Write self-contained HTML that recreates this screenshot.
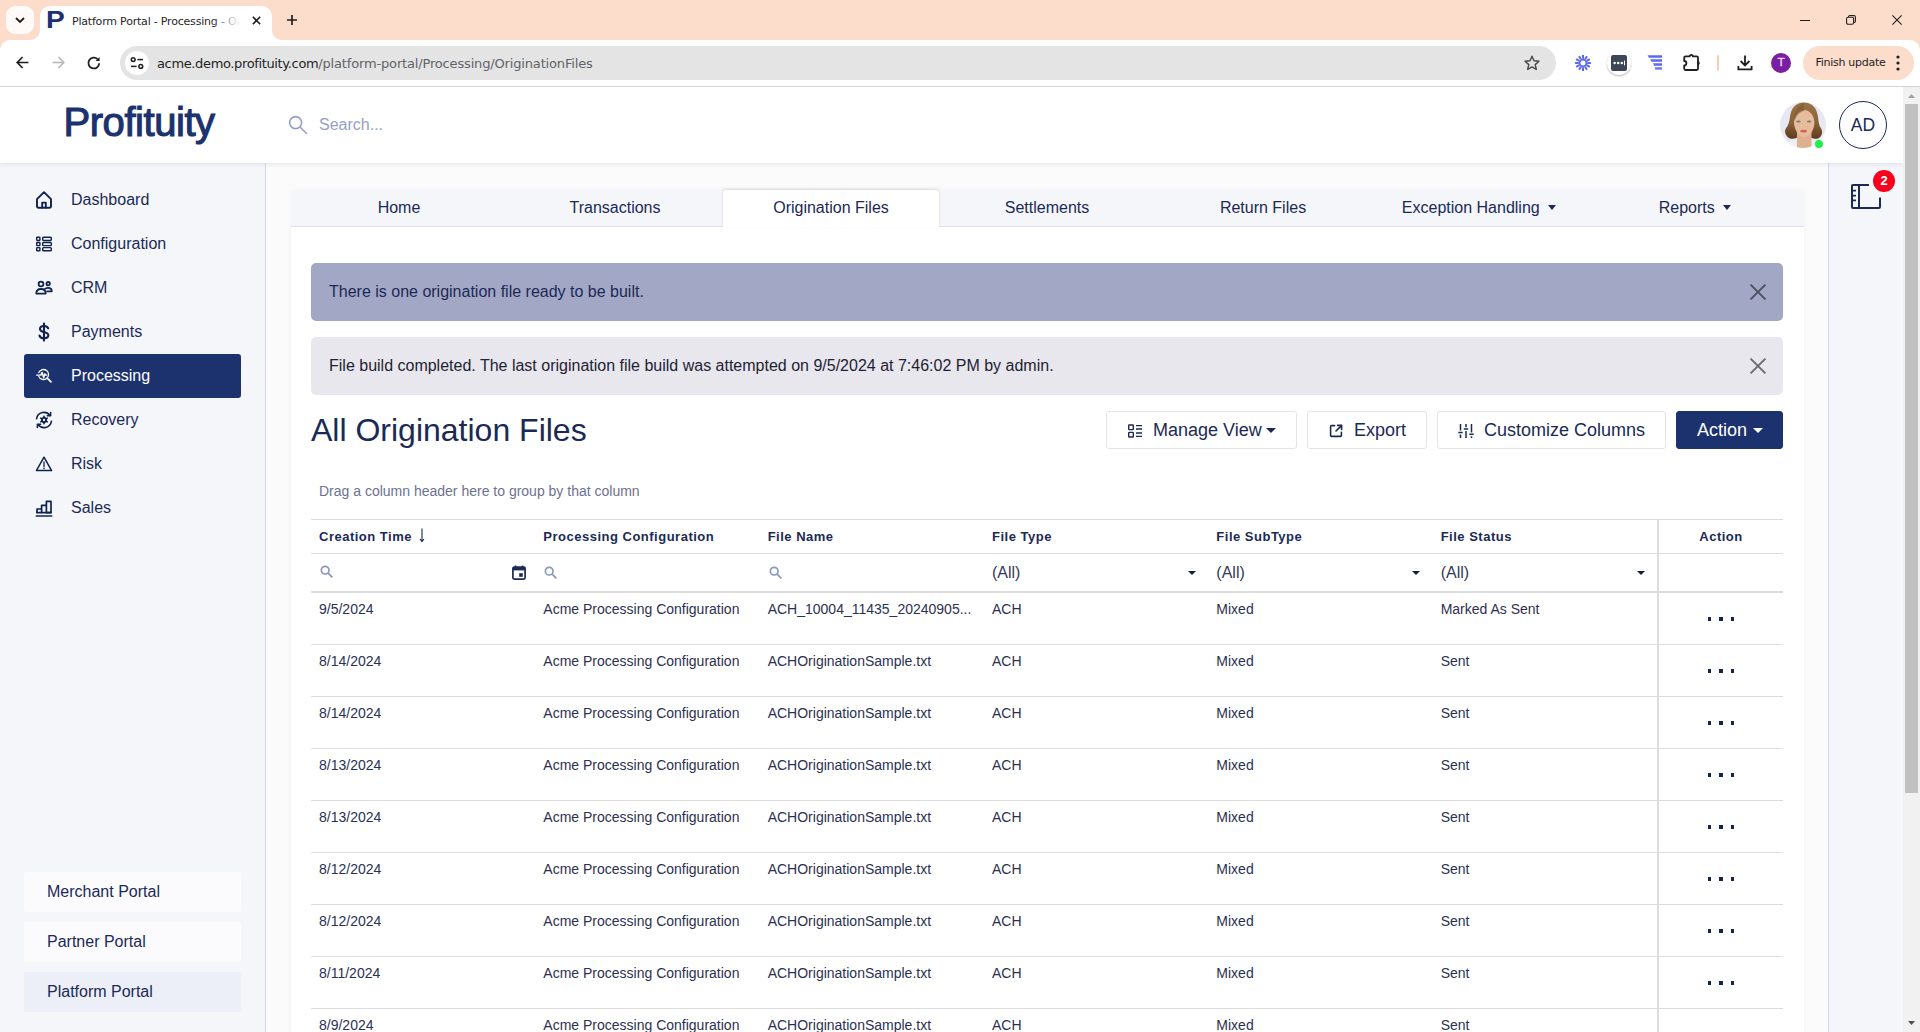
<!DOCTYPE html>
<html lang="en">
<head>
<meta charset="utf-8">
<title>Platform Portal - Processing - Origination Files</title>
<style>
*{box-sizing:border-box;margin:0;padding:0}
html,body{width:1920px;height:1032px;overflow:hidden;background:#fff;font-family:"Liberation Sans",Arial,sans-serif;color:#1b2a55}
#chrome{position:absolute;left:0;top:0;width:1920px;height:87px;background:#fcdccb}
#tabsearch{position:absolute;left:6px;top:6px;width:28px;height:28px;border-radius:9px;background:#fffaf7}
#tab{position:absolute;left:40px;top:6px;width:232px;height:34px;background:#fff;border-radius:10px 10px 0 0}
#tab:before,#tab:after{content:"";position:absolute;bottom:0;width:10px;height:10px}
#tab:before{left:-10px;background:radial-gradient(circle at 0 0,rgba(255,255,255,0) 9.5px,#fff 10.5px)}
#tab:after{right:-10px;background:radial-gradient(circle at 100% 0,rgba(255,255,255,0) 9.5px,#fff 10.5px)}
#fav{position:absolute;left:6px;top:2px;font-size:23px;line-height:24px;font-weight:bold;color:#1b326e;transform:scaleX(1.22);transform-origin:0 0}
#tabtitle{position:absolute;left:32px;top:8px;width:168px;font-size:11px;line-height:16px;color:#262626;white-space:nowrap;overflow:hidden;font-family:"DejaVu Sans","Liberation Sans",sans-serif;letter-spacing:-0.2px}
#tabfade{position:absolute;left:172px;top:4px;width:28px;height:22px;background:linear-gradient(90deg,rgba(255,255,255,0),#fff)}
#chrome svg{position:absolute;overflow:visible}
#toolbar{position:absolute;left:0;top:40px;width:1920px;height:46px;background:#fff;border-radius:10px 10px 0 0}
#chromeline{position:absolute;left:0;top:86px;width:1920px;height:1px;background:#d2d2d2}
#omni{position:absolute;left:120px;top:6px;width:1436px;height:34px;border-radius:17px;background:#e4e4e4}
#omni .site{position:absolute;left:5px;top:5px;width:24px;height:24px;border-radius:12px;background:#fff}
#url{position:absolute;left:37px;top:9px;font-size:13px;line-height:18px;color:#1f1f1f;white-space:nowrap;font-family:"DejaVu Sans","Liberation Sans",sans-serif;letter-spacing:-0.36px}
#url span{color:#5f6368;letter-spacing:-0.16px}
#finish{position:absolute;left:1803px;top:6px;width:111px;height:34px;border-radius:17px;background:#fcdccb;font-size:11px;line-height:34px;color:#1f1f1f;padding-left:12.5px;font-family:"DejaVu Sans","Liberation Sans",sans-serif;letter-spacing:-0.28px}
#profT{position:absolute;left:1771px;top:13px;width:20px;height:20px;border-radius:10px;background:#7b1fa2;color:#ead6f2;font-size:11px;-webkit-text-stroke:.35px #ead6f2;line-height:20px;text-align:center;font-family:"DejaVu Sans","Liberation Sans",sans-serif}
#extbg{position:absolute;left:1607px;top:11px;width:24px;height:24px;border-radius:12px;background:#fff;box-shadow:0 1px 2px rgba(0,0,0,.3)}
#extsq{position:absolute;left:1611px;top:15px;width:16px;height:16px;border-radius:2px;background:#3c4657;color:#fff;font-size:6px;line-height:16px;text-align:center;letter-spacing:0}
#sepbar{position:absolute;left:1717px;top:15px;width:2px;height:16px;background:#f9cdb8;border-radius:1px}

#page{position:absolute;left:0;top:87px;width:1903px;height:945px;background:#fbfbfc;overflow:hidden}
#header{position:absolute;left:0;top:0;width:1903px;height:76px;background:#fff;box-shadow:0 1px 5px rgba(30,40,90,.10);z-index:5}
#logo{position:absolute;left:63.5px;top:10.5px;font-size:40px;line-height:48px;font-weight:normal;color:#1b326e;letter-spacing:-0.45px;-webkit-text-stroke:1.1px #1b326e}
#header svg{position:absolute}
#search{position:absolute;left:319px;top:28px;font-size:16px;line-height:20px;color:#96a0c4}
#avatar{position:absolute;left:1780px;top:15px;width:46px;height:46px;border-radius:23px;background:#e6e8f4;overflow:hidden}
#avatar svg{left:0;top:0}
#online{position:absolute;left:1815px;top:53px;width:8.4px;height:8.4px;border-radius:5px;background:#1ff04a}
#ad{position:absolute;left:1839px;top:14px;width:48px;height:48px;border-radius:24px;border:1px solid #1b2a55;font-size:17.5px;line-height:47px;text-align:center;color:#1b2a55}
#sidebar{position:absolute;left:0;top:76px;width:266px;height:869px;background:#f5f6fa;border-right:1px solid #d4d7ea}
.nav{position:absolute;left:24px;width:217px;height:44px;border-radius:3px;font-size:16px;line-height:44px;padding-left:47px;color:#1b2a55}
.nav.active{background:#1b326e;color:#fff}
.nav svg{position:absolute;left:11px;top:13px;width:18px;height:18px;overflow:visible;color:#10234f}
.nav.active svg{color:#fff}
.portal{position:absolute;left:24px;width:217px;height:40px;border-radius:3px;background:#fbfbfd;font-size:16px;line-height:40px;padding-left:23px;color:#1b2a55}
.portal.cur{background:#eceef8}
#rightbar{position:absolute;left:1828px;top:76px;width:75px;height:869px;background:#f5f6fa;border-left:1px solid #d4d7ea}
#rightbar svg{position:absolute;overflow:visible}
#badge{position:absolute;left:44px;top:7px;width:22px;height:22px;border-radius:11px;background:#f5001d;color:#fff;font-size:13px;font-weight:bold;line-height:22px;text-align:center}
#scroll{position:absolute;left:1903px;top:87px;width:17px;height:945px;background:#f1f1f1}
#thumb{position:absolute;left:2px;top:17px;width:13px;height:689px;background:#c1c1c1}
#card{position:absolute;left:291px;top:102px;width:1513px;height:850px;background:transparent}
#cardbody{position:absolute;left:0;top:1px;width:1513px;height:850px;background:#fff;border-radius:4px 4px 0 0;box-shadow:0 0 7px rgba(20,30,80,.035)}
#tabs{position:absolute;left:0;top:1px;width:1513px;border-radius:4px 4px 0 0;height:37px;background:#f5f6fa;border-bottom:1px solid #dee0ea}
.t{position:absolute;top:0;width:216px;height:36px;font-size:16px;line-height:36px;text-align:center;color:#1b2a55}
.t.on{background:#fff;height:37px;border-radius:3px 3px 0 0;box-shadow:0 -1px 3px rgba(0,0,0,.12)}
.caret{display:inline-block;width:0;height:0;border-left:4.5px solid transparent;border-right:4.5px solid transparent;border-top:5px solid currentColor;vertical-align:middle;margin-left:4px;position:relative;top:-1px}
.caret.sm{border-left-width:4.5px;border-right-width:4.5px;border-top-width:4.5px;color:#141d45}
.caret.lg{border-left-width:5px;border-right-width:5px;border-top-width:5px}
.alert{position:absolute;left:20px;width:1472px;height:58px;border-radius:5px;font-size:16px;line-height:58px;padding-left:18px;white-space:nowrap}
#a1{top:74px;background:#a3a7c6;color:#1b2a55}
#a2{top:148px;background:#e8e7ee;color:#1f2233}
.alert svg{position:absolute;right:16px;top:20px;width:18px;height:18px}
#h1{position:absolute;left:20px;top:221px;font-size:32px;line-height:40px;color:#1b2a55;font-weight:normal;white-space:nowrap}
.btn{position:absolute;top:222px;height:38px;border:1px solid #e3e4ec;border-radius:3px;background:#fff;font-size:18px;line-height:36px;color:#1b2a55;white-space:nowrap}
.btn span{position:absolute;top:0}
.btn .bi{position:absolute;left:19.5px;top:10.5px;width:16px;height:16px}
.btn.pri{background:#1b326e;border-color:#1b326e;color:#fff}
#drag{position:absolute;left:28px;top:294px;font-size:14px;line-height:16px;color:#6e7191}
#grid{position:absolute;left:20px;top:330px;width:1472px;height:520px;border-top:1px solid #ddd}
.hl{position:absolute;left:0;width:1472px;height:1px;background:#ddd}
.vl{position:absolute;left:1346px;top:0;width:2px;height:520px;background:#ddd}
.c{position:absolute;font-size:14px;line-height:16px;color:#2b3152;white-space:nowrap}
.h{position:absolute;font-size:13px;line-height:16px;color:#1b2a55;font-weight:bold;white-space:nowrap;top:9px;letter-spacing:.5px}
.sort{position:absolute;left:99.5px;top:-1.5px;width:6px;height:15px;overflow:visible}
.f{position:absolute;font-size:16px;line-height:18px;color:#333a5c;top:44px}
.mag{position:absolute;width:13.5px;height:13.5px;margin:.3px 0 0 .5px}
.cal{position:absolute;width:14px;height:15px}
.dots{position:absolute;left:1347px;width:126px;height:4px;text-align:center;font-size:0;line-height:0}
.dots b{display:inline-block;width:3.6px;height:4px;background:#16224f;margin:0 4px}

</style>
</head>
<body>
<div id="chrome">
  <div id="tabsearch"></div>
  <svg style="left:15px;top:17px" width="10" height="7" viewBox="0 0 10 7" fill="none" stroke="#1f1f1f" stroke-width="1.8"><path d="M1 1 L5 5 L9 1"/></svg>
  <div id="tab"><div id="fav">P</div><div id="tabtitle">Platform Portal - Processing - Origination Files</div><div id="tabfade"></div>
    <svg style="left:212px;top:10px" width="9" height="9" viewBox="0 0 9 9" fill="none" stroke="#1f1f1f" stroke-width="1.6"><path d="M.8 .8 L8.2 8.2 M8.2 .8 L.8 8.2"/></svg>
  </div>
  <svg style="left:287px;top:15px" width="10" height="10" viewBox="0 0 10 10" fill="none" stroke="#1f1f1f" stroke-width="1.7"><path d="M5 0 V10 M0 5 H10"/></svg>
  <svg style="left:1800px;top:20px" width="10" height="1" viewBox="0 0 10 1"><path d="M0 .5 H10" stroke="#1f1f1f" stroke-width="1"/></svg>
  <svg style="left:1846px;top:15px" width="10" height="10" viewBox="0 0 12 12" fill="none" stroke="#1f1f1f" stroke-width="1.3"><rect x=".7" y="2.7" width="8.4" height="8.4" rx="1.8"/><path d="M3 2.4 V2 A1.6 1.6 0 0 1 4.6 .7 H9.6 A1.8 1.8 0 0 1 11.3 2.4 V7.4 A1.6 1.6 0 0 1 9.8 9 H9.4"/></svg>
  <svg style="left:1892px;top:15px" width="10" height="10" viewBox="0 0 10 10" fill="none" stroke="#1f1f1f" stroke-width="1.1"><path d="M.4 .4 L9.6 9.6 M9.6 .4 L.4 9.6"/></svg>
  <div id="toolbar">
    <svg style="left:16px;top:16px" width="13" height="13" viewBox="0 0 13 13" fill="none" stroke="#1f1f1f" stroke-width="1.7"><path d="M12.4 6.5 H1.6 M6.6 1 L1.2 6.5 L6.6 12"/></svg>
    <svg style="left:52px;top:16px" width="13" height="13" viewBox="0 0 13 13" fill="none" stroke="#b8b8b8" stroke-width="1.7"><path d="M.6 6.5 H11.4 M6.4 1 L11.8 6.5 L6.4 12"/></svg>
    <svg style="left:87px;top:16px" width="14" height="14" viewBox="0 0 14 14" fill="none" stroke="#1f1f1f" stroke-width="1.8"><path d="M12.2 7.2 A5.4 5.4 0 1 1 10.6 3.2"/><path d="M12.6 1 V5 H8.6" fill="#1f1f1f" stroke="none"/></svg>
    <div id="omni"><div class="site"></div>
      <svg style="left:10px;top:11px" width="14" height="12" viewBox="0 0 14 12" fill="none" stroke="#1f1f1f" stroke-width="1.5"><circle cx="3.2" cy="2.6" r="1.9"/><path d="M7.4 2.6 H13"/><circle cx="10.8" cy="9.4" r="1.9"/><path d="M1 9.4 H6.6"/></svg>
      <div id="url">acme.demo.profituity.com<span>/platform-portal/Processing/OriginationFiles</span></div>
      <svg style="left:1404px;top:9px" width="16" height="16" viewBox="0 0 16 16" fill="none" stroke="#474747" stroke-width="1.4" stroke-linejoin="round"><path d="M8 1.2 L10 5.8 L15 6.3 L11.2 9.6 L12.3 14.5 L8 11.9 L3.7 14.5 L4.8 9.6 L1 6.3 L6 5.8 Z"/></svg>
    </div>
    <svg style="left:1575px;top:15px" width="16" height="16" viewBox="0 0 16 16" fill="none" stroke="#5b68f0" stroke-width="2"><circle cx="8" cy="8" r="3.4" stroke-width="1.8"/><path d="M12.20 8.00L15.90 8.00M11.64 10.10L14.84 11.95M10.10 11.64L11.95 14.84M8.00 12.20L8.00 15.90M5.90 11.64L4.05 14.84M4.36 10.10L1.16 11.95M3.80 8.00L0.10 8.00M4.36 5.90L1.16 4.05M5.90 4.36L4.05 1.16M8.00 3.80L8.00 0.10M10.10 4.36L11.95 1.16M11.64 5.90L14.84 4.05"/></svg>
    <div id="extbg"></div><div id="extsq"><svg style="left:0;top:0" width="16" height="16" viewBox="0 0 16 16" fill="#fff"><circle cx="3.6" cy="8" r="1.25"/><circle cx="7.2" cy="8" r="1.25"/><circle cx="10.8" cy="8" r="1.25"/><rect x="13" y="5.6" width="1" height="4.8"/></svg></div>
    <svg style="left:1647px;top:15px" width="16" height="16" viewBox="0 0 16 16" fill="#5b68f0"><path d="M.6 .2 H15 V2.7 H2 Z"/><path d="M3.2 4.2 H15 V6.7 H4.6 Z"/><path d="M6 8.2 H15 V10.7 H7.2 Z"/><rect x="8" y="12.2" width="7" height="2.5" fill="#6f7cf3"/></svg>
    <svg style="left:1683px;top:13px" width="18" height="19" viewBox="0 0 18 19" fill="none" stroke="#1f1f1f" stroke-width="1.8" stroke-linejoin="round"><path d="M2.6 3.4 H6.6 A1.6 1.6 0 0 1 9.8 3.4 H13.6 A1.4 1.4 0 0 1 15 4.8 V15.6 A1.4 1.4 0 0 1 13.6 17 H2.6 A1.4 1.4 0 0 1 1.2 15.6 V12.4 A2.2 2.2 0 0 0 1.2 8 V4.8 A1.4 1.4 0 0 1 2.6 3.4 Z"/><path d="M15 8.6 A1.7 1.7 0 0 1 15 11.8 Z" fill="#1f1f1f" stroke-width="1.2"/></svg>
    <div id="sepbar"></div>
    <svg style="left:1737px;top:15px" width="16" height="16" viewBox="0 0 16 16" fill="none" stroke="#1f1f1f" stroke-width="1.8"><path d="M8 .5 V10 M3.6 6 L8 10.4 L12.4 6"/><path d="M1.4 11 V14.4 H14.6 V11"/></svg>
    <div id="profT">T</div>
    <div id="finish">Finish update</div>
    <svg style="left:1896px;top:15px" width="4" height="16" viewBox="0 0 4 16" fill="#1f1f1f"><circle cx="2" cy="2" r="1.6"/><circle cx="2" cy="8" r="1.6"/><circle cx="2" cy="14" r="1.6"/></svg>
  </div>
  <div id="chromeline"></div>
</div>
<div id="page">
  <div id="sidebar">
<div class="nav" style="top:15px"><svg viewBox="0 0 18 18" fill="none" stroke="currentColor" stroke-width="1.9" stroke-linejoin="round" stroke-linecap="round"><path d="M2 8.2 L9 1.2 L16 8.2 V15.3 a1.5 1.5 0 0 1 -1.5 1.5 H3.5 A1.5 1.5 0 0 1 2 15.3 Z"/><path d="M7.2 16.6 V11.6 H10.8 V16.6"/></svg>Dashboard</div>
<div class="nav" style="top:59px"><svg viewBox="0 0 18 18" fill="none" stroke="currentColor" stroke-width="1.45"><rect x="1.7" y="2.2" width="3.2" height="3.2" rx=".6"/><rect x="1.7" y="7.4" width="3.2" height="3.2" rx=".6"/><rect x="1.7" y="12.6" width="3.2" height="3.2" rx=".6"/><rect x="7.7" y="2.2" width="8.6" height="3.2" rx=".8"/><rect x="7.7" y="7.4" width="8.6" height="3.2" rx=".8"/><rect x="7.7" y="12.6" width="8.6" height="3.2" rx=".8"/></svg>Configuration</div>
<div class="nav" style="top:103px"><svg viewBox="0 0 18 18" fill="none" stroke="currentColor" stroke-width="1.8" stroke-linejoin="round"><circle cx="6" cy="5" r="2.4"/><circle cx="13.2" cy="4.7" r="1.7"/><path d="M1.3 14.6 C1.3 11.4 3.4 10 6 10 S10.7 11.4 10.7 14.6 Z"/><path d="M9.6 10.2 C10.6 9.2 11.8 8.8 13 8.8 C15.2 8.8 16.8 10 16.8 12.3 H11.4"/></svg>CRM</div>
<div class="nav" style="top:147px"><svg viewBox="0 0 18 18" fill="none" stroke="currentColor" stroke-width="2.1" stroke-linecap="round"><path d="M13.2 5.3 C12.6 3.6 11 3 9 3 C6.6 3 5 4.2 5 5.9 C5 7.7 6.6 8.4 9 9 C11.6 9.6 13.3 10.4 13.3 12.3 C13.3 14.1 11.5 15.2 9 15.2 C6.6 15.2 5 14.3 4.5 12.6"/><path d="M9 .6 V17.6"/></svg>Payments</div>
<div class="nav active" style="top:191px"><svg viewBox="-1 0 20 20" fill="none" stroke="currentColor" stroke-width="1.4" stroke-linecap="round" stroke-linejoin="round"><path d="M3.3 6.2 A5.6 5.6 0 1 1 3.3 10.6"/><path d="M12.6 12.4 L16.8 16.6" stroke-width="1.8"/><path d="M.8 9 H5.6 L6.9 6 L8.6 12 L10 7.6 L10.8 9 H12" stroke-width="1.6"/></svg>Processing</div>
<div class="nav" style="top:235px"><svg viewBox="0 0 18 18" fill="none" stroke="currentColor" stroke-width="1.6" stroke-linecap="round" stroke-linejoin="round"><path d="M1.6 7.6 A7.5 7.5 0 0 1 15 4.4"/><path d="M15.6 1.6 V4.8 H12.4"/><path d="M16.4 10.4 A7.5 7.5 0 0 1 3 13.6"/><path d="M2.4 16.4 V13.2 H5.6"/><circle cx="9" cy="9" r="2.1" stroke-width="1.9"/><path d="M9 5.4V6.4M9 11.6V12.6M5.9 7.2l.9.5M11.2 10.3l.9.5M5.9 10.8l.9-.5M11.2 7.7l.9-.5" stroke-width="1.7"/></svg>Recovery</div>
<div class="nav" style="top:279px"><svg viewBox="0 0 18 18" fill="none" stroke="currentColor" stroke-width="1.5" stroke-linecap="round" stroke-linejoin="round"><path d="M9 2.2 L16.6 15.6 H1.4 Z"/><path d="M9 7 V11.4" stroke-width="1.3"/><path d="M9 13.4 V13.5" stroke-width="1.6"/></svg>Risk</div>
<div class="nav" style="top:323px"><svg viewBox="0 0 18 18" fill="none" stroke="currentColor" stroke-width="1.7" stroke-linejoin="round" stroke-linecap="round"><path d="M2 13.6 V10 H6.6 V13.6 M6.6 13.6 V6.4 H11.4 V13.6 M11.4 13.6 V2.4 H16 V13.6 Z"/><path d="M2 13.6 H16"/><path d="M1.4 17 H16.6"/></svg>Sales</div>
<div class="portal" style="top:709px">Merchant Portal</div>
<div class="portal" style="top:759px">Partner Portal</div>
<div class="portal cur" style="top:809px">Platform Portal</div>

  </div>
  <div id="rightbar">
    <svg style="left:22px;top:21px" width="30" height="25" viewBox="0 0 30 26" preserveAspectRatio="none" fill="none" stroke="#1b2a55" stroke-width="2" stroke-linejoin="round"><path d="M18 1 H2 A1 1 0 0 0 1 2 V24 A1 1 0 0 0 2 25 H28 A1 1 0 0 0 29 24 V14"/><path d="M8 1 V25"/><path d="M1 7 H5 M1 12 H5 M1 17 H5" stroke-width="1.8"/></svg>
    <div id="badge">2</div>
  </div>
  <div id="card"><div id="cardbody"></div>
    <div id="tabs"><div class="t" style="left:0px">Home</div><div class="t" style="left:216px">Transactions</div><div class="t on" style="left:432px">Origination Files</div><div class="t" style="left:648px">Settlements</div><div class="t" style="left:864px">Return Files</div><div class="t" style="left:1080px">Exception Handling <i class="caret"></i></div><div class="t" style="left:1296px">Reports <i class="caret"></i></div></div>
<div class="alert" id="a1">There is one origination file ready to be built.<svg viewBox="0 0 18 18" fill="none" stroke="#4d525f" stroke-width="2"><path d="M1.6 1.6 L16.4 16.4 M16.4 1.6 L1.6 16.4"/></svg></div>
<div class="alert" id="a2">File build completed. The last origination file build was attempted on 9/5/2024 at 7:46:02 PM by admin.<svg viewBox="0 0 18 18" fill="none" stroke="#6a6c76" stroke-width="2"><path d="M1.6 1.6 L16.4 16.4 M16.4 1.6 L1.6 16.4"/></svg></div>

    <div id="h1">All Origination Files</div>
<div class="btn" style="left:815px;width:191px"><svg class="bi" viewBox="0 0 16 16" fill="none" stroke="currentColor" stroke-width="1.4"><rect x="1.7" y="2" width="4.6" height="4.6" rx=".5"/><rect x="1.7" y="9.4" width="4.6" height="4.6" rx=".5"/><path d="M9 2.6H15M9 6H15M9 10H15M9 13.4H15"/></svg><span style="left:46px">Manage View</span><i class="caret lg" style="position:absolute;left:159px;top:16px;margin:0"></i></div><div class="btn" style="left:1016px;width:120px"><svg class="bi" viewBox="0 0 16 16" fill="none" stroke="currentColor" stroke-width="1.6" stroke-linecap="round" stroke-linejoin="round"><path d="M6.6 2.6 H3.6 A1 1 0 0 0 2.6 3.6 V12.4 A1 1 0 0 0 3.6 13.4 H12.4 A1 1 0 0 0 13.4 12.4 V9.4"/><path d="M9.6 2.4 H13.6 V6.4"/><path d="M13.4 2.6 L8 8"/></svg><span style="left:46px">Export</span></div><div class="btn" style="left:1146px;width:229px"><svg class="bi" viewBox="0 0 16 16" fill="none" stroke="currentColor" stroke-width="1.5"><path d="M2.5 1V7.6M2.5 11.4V15M8 1V4.2M8 8V15M13.5 1V9.4M13.5 13.2V15M.3 9.5H4.7M5.8 6.1H10.2M11.3 11.3H15.7"/></svg><span style="left:46px">Customize Columns</span></div><div class="btn pri" style="left:1385px;width:107px"><span style="left:20px">Action</span><i class="caret lg" style="position:absolute;left:76px;top:16px;margin:0"></i></div>
    <div id="drag">Drag a column header here to group by that column</div>
    <div id="grid"><div class="h" style="left:8.00px">Creation Time<svg class="sort" viewBox="0 0 6 15" fill="none" stroke="#1b2a55" stroke-width="1.1"><path d="M3 0.5 V13.2 M1 11 L3 13.6 L5 11"/></svg></div><div class="h" style="left:232.33px">Processing Configuration</div><div class="h" style="left:456.67px">File Name</div><div class="h" style="left:681.00px">File Type</div><div class="h" style="left:905.33px">File SubType</div><div class="h" style="left:1129.67px">File Status</div><div class="h" style="left:1347px;width:126px;text-align:center">Action</div><div class="hl" style="top:33px"></div><svg class="mag" viewBox="0 0 12 12" fill="none" stroke="#8b98bc" stroke-width="1.5" style="left:8px;top:45px"><circle cx="4.6" cy="4.6" r="3.4"/><path d="M7.2 7.2 L11 11"/></svg><svg class="mag" viewBox="0 0 12 12" fill="none" stroke="#8b98bc" stroke-width="1.5" style="left:232px;top:46px"><circle cx="4.6" cy="4.6" r="3.4"/><path d="M7.2 7.2 L11 11"/></svg><svg class="mag" viewBox="0 0 12 12" fill="none" stroke="#8b98bc" stroke-width="1.5" style="left:457px;top:46px"><circle cx="4.6" cy="4.6" r="3.4"/><path d="M7.2 7.2 L11 11"/></svg><svg class="cal" viewBox="0 0 14 15" style="left:201px;top:45px"><path d="M3.5 0.4 V2.4 M10.5 0.4 V2.4" stroke="#1b2a55" stroke-width="1.6"/><rect x=".9" y="2.2" width="12.2" height="11.9" rx="1.3" fill="none" stroke="#1b2a55" stroke-width="1.7"/><rect x=".9" y="2.2" width="12.2" height="3.2" fill="#1b2a55"/><rect x="7.2" y="8.2" width="3.6" height="3.6" fill="#1b2a55"/></svg><div class="f" style="left:681.00px">(All)</div><i class="caret sm" style="position:absolute;left:877.00px;top:51px;margin:0"></i><div class="f" style="left:905.33px">(All)</div><i class="caret sm" style="position:absolute;left:1101.33px;top:51px;margin:0"></i><div class="f" style="left:1129.67px">(All)</div><i class="caret sm" style="position:absolute;left:1325.67px;top:51px;margin:0"></i><div class="hl" style="top:71px;height:2px"></div><div class="c" style="left:8.00px;top:81px">9/5/2024</div><div class="c" style="left:232.33px;top:81px">Acme Processing Configuration</div><div class="c" style="left:456.67px;top:81px">ACH_10004_11435_20240905...</div><div class="c" style="left:681.00px;top:81px">ACH</div><div class="c" style="left:905.33px;top:81px">Mixed</div><div class="c" style="left:1129.67px;top:81px">Marked As Sent</div><div class="dots" style="top:97px"><b></b><b></b><b></b></div><div class="hl" style="top:124px"></div><div class="c" style="left:8.00px;top:133px">8/14/2024</div><div class="c" style="left:232.33px;top:133px">Acme Processing Configuration</div><div class="c" style="left:456.67px;top:133px">ACHOriginationSample.txt</div><div class="c" style="left:681.00px;top:133px">ACH</div><div class="c" style="left:905.33px;top:133px">Mixed</div><div class="c" style="left:1129.67px;top:133px">Sent</div><div class="dots" style="top:149px"><b></b><b></b><b></b></div><div class="hl" style="top:176px"></div><div class="c" style="left:8.00px;top:185px">8/14/2024</div><div class="c" style="left:232.33px;top:185px">Acme Processing Configuration</div><div class="c" style="left:456.67px;top:185px">ACHOriginationSample.txt</div><div class="c" style="left:681.00px;top:185px">ACH</div><div class="c" style="left:905.33px;top:185px">Mixed</div><div class="c" style="left:1129.67px;top:185px">Sent</div><div class="dots" style="top:201px"><b></b><b></b><b></b></div><div class="hl" style="top:228px"></div><div class="c" style="left:8.00px;top:237px">8/13/2024</div><div class="c" style="left:232.33px;top:237px">Acme Processing Configuration</div><div class="c" style="left:456.67px;top:237px">ACHOriginationSample.txt</div><div class="c" style="left:681.00px;top:237px">ACH</div><div class="c" style="left:905.33px;top:237px">Mixed</div><div class="c" style="left:1129.67px;top:237px">Sent</div><div class="dots" style="top:253px"><b></b><b></b><b></b></div><div class="hl" style="top:280px"></div><div class="c" style="left:8.00px;top:289px">8/13/2024</div><div class="c" style="left:232.33px;top:289px">Acme Processing Configuration</div><div class="c" style="left:456.67px;top:289px">ACHOriginationSample.txt</div><div class="c" style="left:681.00px;top:289px">ACH</div><div class="c" style="left:905.33px;top:289px">Mixed</div><div class="c" style="left:1129.67px;top:289px">Sent</div><div class="dots" style="top:305px"><b></b><b></b><b></b></div><div class="hl" style="top:332px"></div><div class="c" style="left:8.00px;top:341px">8/12/2024</div><div class="c" style="left:232.33px;top:341px">Acme Processing Configuration</div><div class="c" style="left:456.67px;top:341px">ACHOriginationSample.txt</div><div class="c" style="left:681.00px;top:341px">ACH</div><div class="c" style="left:905.33px;top:341px">Mixed</div><div class="c" style="left:1129.67px;top:341px">Sent</div><div class="dots" style="top:357px"><b></b><b></b><b></b></div><div class="hl" style="top:384px"></div><div class="c" style="left:8.00px;top:393px">8/12/2024</div><div class="c" style="left:232.33px;top:393px">Acme Processing Configuration</div><div class="c" style="left:456.67px;top:393px">ACHOriginationSample.txt</div><div class="c" style="left:681.00px;top:393px">ACH</div><div class="c" style="left:905.33px;top:393px">Mixed</div><div class="c" style="left:1129.67px;top:393px">Sent</div><div class="dots" style="top:409px"><b></b><b></b><b></b></div><div class="hl" style="top:436px"></div><div class="c" style="left:8.00px;top:445px">8/11/2024</div><div class="c" style="left:232.33px;top:445px">Acme Processing Configuration</div><div class="c" style="left:456.67px;top:445px">ACHOriginationSample.txt</div><div class="c" style="left:681.00px;top:445px">ACH</div><div class="c" style="left:905.33px;top:445px">Mixed</div><div class="c" style="left:1129.67px;top:445px">Sent</div><div class="dots" style="top:461px"><b></b><b></b><b></b></div><div class="hl" style="top:488px"></div><div class="c" style="left:8.00px;top:497px">8/9/2024</div><div class="c" style="left:232.33px;top:497px">Acme Processing Configuration</div><div class="c" style="left:456.67px;top:497px">ACHOriginationSample.txt</div><div class="c" style="left:681.00px;top:497px">ACH</div><div class="c" style="left:905.33px;top:497px">Mixed</div><div class="c" style="left:1129.67px;top:497px">Sent</div><div class="dots" style="top:513px"><b></b><b></b><b></b></div><div class="hl" style="top:540px"></div><div class="vl"></div></div>
  </div>
  <div id="header">
    <div id="logo">Profituity</div>
    <svg style="left:288px;top:28px" width="20" height="20" viewBox="0 0 20 20" fill="none" stroke="#96a0c4" stroke-width="1.6"><circle cx="7.6" cy="7.6" r="6"/><path d="M12 12 L19 19"/></svg>
    <div id="search">Search...</div>
    <div id="avatar"><svg width="46" height="46" viewBox="0 0 46 46">
<defs><linearGradient id="hg" x1="0" y1="0" x2="0" y2="1"><stop offset="0" stop-color="#9a7446"/><stop offset=".55" stop-color="#8a6238"/><stop offset="1" stop-color="#5e3b1c"/></linearGradient></defs>
<path d="M8 46 L10 39 L18 36 L30 36 L36 39 L38 46 Z" fill="#eef0f8"/>
<path d="M24 .6 C15 .6 11 7 10 15 C9.4 20 8 24 5.6 27 C4 30 6 35 10 36.4 C14 37.6 18 36 19 33 L29 33 C30 36 34 37.6 38 36.4 C42 35 43 30 41.4 27 C39 24 38.6 20 38 15 C37 7 33 .6 24 .6 Z" fill="url(#hg)"/>
<path d="M17 30 H31.5 V46 H17 Z" fill="#deb08f"/>
<path d="M24.2 8 C19 8 14.4 13 14 20 C13.8 27 18.5 35 24.2 35 C30 35 34.6 27 34.4 20 C34 13 29.5 8 24.2 8 Z" fill="#e6bc9d"/>
<path d="M24 1 C23.4 4 23.6 7 24.4 9 C20 9.5 16.5 13 14.6 19 C13 14 15 5 24 1 Z" fill="#7d5730" opacity=".6"/>
<ellipse cx="18.4" cy="19.4" rx="2.3" ry="1" fill="#6f8578"/><ellipse cx="29.2" cy="19.4" rx="2.3" ry="1" fill="#6f8578"/>
<ellipse cx="23.6" cy="29.2" rx="3.3" ry="1.4" fill="#d9605c"/>
</svg></div><div id="online"></div>
    <div id="ad">AD</div>
  </div>
</div>
<div id="scroll"><div id="thumb"></div>
  <svg style="position:absolute;left:5px;top:7px" width="7" height="4" viewBox="0 0 7 4"><path d="M0 4 L3.5 0 L7 4 Z" fill="#a3a3a3"/></svg>
  <svg style="position:absolute;left:5px;top:934px" width="7" height="4" viewBox="0 0 7 4"><path d="M0 0 L3.5 4 L7 0 Z" fill="#505050"/></svg>
</div>
</body>
</html>
